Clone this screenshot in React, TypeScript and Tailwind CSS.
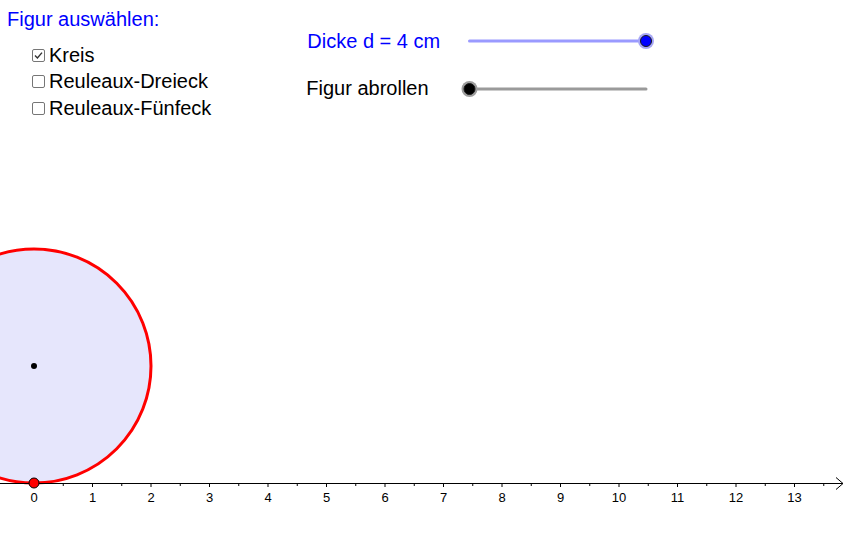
import React from "react";

const UNIT = 58.5;
const ORIGIN_X = 34;
const AXIS_Y = 483.5;

const figures = [
  { label: "Kreis", checked: true },
  { label: "Reuleaux-Dreieck", checked: false },
  { label: "Reuleaux-Fünfeck", checked: false },
];

function CheckBox({ checked }: { checked: boolean }) {
  return (
    <span className="flex h-[13px] w-[13px] items-center justify-center rounded-[2px] border border-[#767676] bg-white">
      {checked && (
        <svg width="11" height="11" viewBox="0 0 11 11">
          <path
            d="M2 5.6 L4.4 8 L9 2.6"
            fill="none"
            stroke="#333"
            strokeWidth="1.4"
          />
        </svg>
      )}
    </span>
  );
}

function Slider({
  value,
  line,
  ring,
  knob,
}: {
  value: number;
  line: string;
  ring: string;
  knob: string;
}) {
  // track from x=10 to x=187 inside a 198px wide drawing
  const x0 = 10.5;
  const x1 = 187;
  const kx = x0 + (x1 - x0) * value;
  return (
    <svg width="198" height="22" viewBox="0 0 198 22" className="block">
      <line x1={x0} y1="11" x2={x1} y2="11" stroke={line} strokeWidth="3" strokeLinecap="round" />
      <circle cx={kx} cy="11" r="8" fill={ring} />
      <circle cx={kx} cy="11" r="5.5" fill={knob} stroke="#1a1a1a" strokeWidth="1" />
    </svg>
  );
}

function Canvas() {
  const ticks: React.ReactNode[] = [];
  for (let k = 0; k <= 28; k++) {
    const x = ORIGIN_X + (UNIT / 2) * k;
    if (x > 836) break;
    const major = k % 2 === 0;
    ticks.push(
      <line
        key={"t" + k}
        x1={x}
        y1={AXIS_Y}
        x2={x}
        y2={AXIS_Y + (major ? 3.5 : 2.5)}
        stroke="#000"
        strokeWidth="1"
      />
    );
  }
  const labels = Array.from({ length: 14 }, (_, i) => i);

  return (
    <svg
      width="847"
      height="547"
      viewBox="0 0 847 547"
      className="absolute inset-0"
    >
      <circle
        cx={ORIGIN_X}
        cy="366"
        r="117"
        fill="#e6e6fc"
        stroke="#ff0000"
        strokeWidth="3"
      />
      <line x1="0" y1={AXIS_Y} x2="843" y2={AXIS_Y} stroke="#000" strokeWidth="1" />
      <polyline
        points={`836,477.5 843,${AXIS_Y} 836,489.5`}
        fill="none"
        stroke="#000"
        strokeWidth="1"
      />
      {ticks}
      {labels.map((n) => (
        <text
          key={n}
          x={ORIGIN_X + UNIT * n}
          y="502"
          textAnchor="middle"
          fontSize="13"
          fontFamily="'Liberation Sans', Arial, sans-serif"
          fill="#000"
        >
          {n}
        </text>
      ))}
      <circle cx={ORIGIN_X} cy="366" r="3" fill="#000" />
      <circle cx={ORIGIN_X} cy="483" r="5" fill="#ff0000" stroke="#000" strokeWidth="1" />
    </svg>
  );
}

export default function App() {
  return (
    <div className="relative h-[547px] w-[847px] overflow-hidden bg-white font-['Liberation_Sans',Arial,sans-serif] text-[20px] text-black">
      <Canvas />
      <div className="relative flex">
        <div className="pl-[7px] pt-[8px]">
          <div className="leading-[23px] text-[#0000ff]">Figur auswählen:</div>
          <div className="mt-[11px] pl-[25px]">
            {figures.map((f) => (
              <div key={f.label} className="flex h-[26.5px] items-center gap-[4px]">
                <CheckBox checked={f.checked} />
                <span className="leading-[23px]">{f.label}</span>
              </div>
            ))}
          </div>
        </div>
        <div className="ml-[95px] flex flex-col gap-[25.5px] pt-[30px]">
          <div className="flex h-[22px] items-center">
            <span className="w-[153px] pl-[1px] leading-[23px] text-[#0000ff]">
              Dicke d = 4 cm
            </span>
            <Slider value={1} line="#9a9aff" ring="#a6a6f5" knob="#0000ff" />
          </div>
          <div className="flex h-[22px] items-center">
            <span className="w-[153px] leading-[23px]">Figur abrollen</span>
            <Slider value={0} line="#9a9a9a" ring="#9d9d9d" knob="#000000" />
          </div>
        </div>
      </div>
    </div>
  );
}
